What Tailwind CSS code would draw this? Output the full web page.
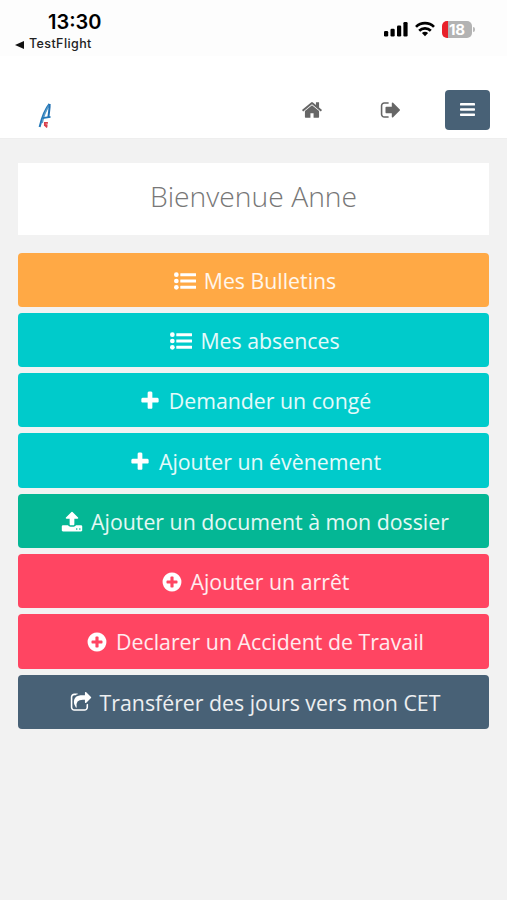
<!doctype html>
<html lang="fr">

<head>
    <meta charset="UTF-8">
    <meta name="viewport" content="width=device-width, initial-scale=1.0">
    <title>Bienvenue</title>
    <script src="https://cdn.jsdelivr.net/npm/@tailwindcss/browser@4"></script>
</head>

<body class="bg-[#f2f2f2] font-['Open_Sans',sans-serif] min-h-screen">

    <!-- status bar + navbar -->
    <header class="bg-white h-[139px] border-b border-[#eeeeee]">
        <div class="h-[56px] bg-[#fdfdfd] flex justify-between font-['Inter',sans-serif] text-black">
            <div class="pl-[15px] pt-[10px]">
                <div class="pl-[33px] text-[20px] leading-6 font-semibold"><span id="time">13:30</span></div>
                <div class="flex items-center gap-[5px] h-[21px] text-[12.5px] tracking-[0.4px] font-medium text-[#222]">
                    <svg class="w-[9px] h-[8px]" viewBox="0 0 9 8"><path d="M0 4L9 0v8z" fill="#111" /></svg>
                    <span id="back">TestFlight</span>
                </div>
            </div>
            <div class="flex items-start pt-[21px] pr-[32px]">
                <svg class="w-[24px] h-[16px]" viewBox="0 0 24 16" fill="#000">
                    <rect x="0" y="10" width="4.2" height="5.5" rx="1.2" />
                    <rect x="6.5" y="7.7" width="4.2" height="7.8" rx="1.2" />
                    <rect x="13" y="4.5" width="4.2" height="11" rx="1.2" />
                    <rect x="19.4" y="1" width="4.2" height="14.5" rx="1.2" />
                </svg>
                <svg class="w-[20px] h-[16px] ml-[7px]" viewBox="0 0 20 16" fill="none" stroke="#000" stroke-width="2.7">
                    <path d="M1 5.9a12.8 12.8 0 0 1 18 0M4.2 9.7a8.2 8.2 0 0 1 11.6 0" />
                    <path d="M10 15.2l-3.1-3.1a4.5 4.5 0 0 1 6.2 0z" fill="#000" stroke="none" />
                </svg>
                <div class="ml-[7px] w-[30px] h-[17px] rounded-[5px] bg-[linear-gradient(90deg,#e8202a_6px,#b3b3b3_6px)] text-white text-[15px] leading-[17px] font-bold text-center">18</div>
                <div class="w-[2px] h-[5px] ml-px mt-[6px] rounded-r bg-[#b9b9b9]"></div>
            </div>
        </div>

        <nav class="flex items-center h-[82px] pt-[25px] pl-[37px] pr-[17.5px]">
            <!-- logo -->
            <svg class="w-[16px] h-[28px] mt-[12px] mr-auto" viewBox="0 0 16 28" fill="none">
                <path d="M2.6 25C4.6 17 7.5 8 12.5 2" stroke="#2478b8" stroke-width="2" />
                <path d="M5.2 21C6.6 14 9 8 12.4 3" stroke="#5a9cc9" stroke-width="1.4" />
                <path d="M12.6 2c.4 4-1 9-1.2 14" stroke="#1f6fb2" stroke-width="2" />
                <path d="M5.5 16.2l8-1.4" stroke="#2478b8" stroke-width="1.8" />
                <path d="M10.9 20.9H7.8v2.2h2.7M7.8 23.1l2.4 2.3" stroke="#d9404c" stroke-width="1.7" />
            </svg>
            <svg class="w-[22px] h-[22px]" viewBox="0 0 1792 1792" fill="#666">
                <path d="M1472 992v480q0 26-19 45t-45 19h-384v-384h-256v384h-384q-26 0-45-19t-19-45v-480q0-1 .5-3t.5-3l575-474 575 474q1 2 1 6zm223-69l-62 74q-8 9-21 11h-3q-13 0-21-7l-692-577-692 577q-12 8-24 7-13-2-21-11l-62-74q-8-10-7-23.5t11-21.5l719-599q32-26 76-26t76 26l244 204v-195q0-14 9-23t23-9h192q14 0 23 9t9 23v408l219 182q10 8 11 21.5t-7 23.5z" />
            </svg>
            <svg class="w-[22px] h-[22px] ml-[57px]" viewBox="0 0 1792 1792" fill="#666">
                <path d="M704 1440q0 4 1 20t.5 26.5-3 23.5-10 19.5-20.5 6.5h-320q-119 0-203.5-84.5t-84.5-203.5v-704q0-119 84.5-203.5t203.5-84.5h320q13 0 22.5 9.5t9.5 22.5q0 4 1 20t.5 26.5-3 23.5-10 19.5-20.5 6.5h-320q-66 0-113 47t-47 113v704q0 66 47 113t113 47h312l11.5 1 11.5 3 8 5.5 7 9 2 13.5zm928-544q0 26-19 45l-544 544q-19 19-45 19t-45-19-19-45v-288h-448q-26 0-45-19t-19-45v-384q0-26 19-45t45-19h448v-288q0-26 19-45t45-19 45 19l544 544q19 19 19 45z" />
            </svg>
            <button class="w-[45px] h-[40px] ml-[43px] rounded bg-[#486176] flex items-center justify-center">
                <svg class="w-[15px] h-[13px]" viewBox="0 0 15 13" fill="#fff">
                    <rect width="15" height="2.6" rx=".7" />
                    <rect y="5.2" width="15" height="2.6" rx=".7" />
                    <rect y="10.4" width="15" height="2.6" rx=".7" />
                </svg>
            </button>
        </nav>
    </header>

    <main class="px-[18px] pt-[24px]">
        <h1 class="h-[72px] bg-white text-center text-[#777] text-[28.3px] leading-[66px] font-light"><span>Bienvenue Anne</span></h1>

        <div class="mt-[17.5px] flex flex-col gap-[6px] text-[21.3px] text-white/90">
            <a href="#" class="h-[54.3px] pt-[2px] pl-[2px] rounded bg-[#ffa945] flex items-center justify-center gap-[7px]">
                <svg class="w-[24px] h-[22px]" viewBox="0 0 1792 1792" fill="#fff">
                    <circle cx="192" cy="384" r="192" /><circle cx="192" cy="896" r="192" /><circle cx="192" cy="1408" r="192" />
                    <rect x="512" y="256" width="1280" height="256" rx="32" /><rect x="512" y="768" width="1280" height="256" rx="32" /><rect x="512" y="1280" width="1280" height="256" rx="32" />
                </svg>
                <span>Mes Bulletins</span>
            </a>
            <a href="#" class="h-[54.3px] pt-[2px] pl-[2px] rounded bg-[#00cbcb] flex items-center justify-center gap-[7px]">
                <svg class="w-[24px] h-[22px]" viewBox="0 0 1792 1792" fill="#fff">
                    <circle cx="192" cy="384" r="192" /><circle cx="192" cy="896" r="192" /><circle cx="192" cy="1408" r="192" />
                    <rect x="512" y="256" width="1280" height="256" rx="32" /><rect x="512" y="768" width="1280" height="256" rx="32" /><rect x="512" y="1280" width="1280" height="256" rx="32" />
                </svg>
                <span>Mes absences</span>
            </a>
            <a href="#" class="h-[54.3px] pt-[2px] pl-[2px] rounded bg-[#00cbcb] flex items-center justify-center gap-[7px]">
                <svg class="w-[24px] h-[22px]" viewBox="0 0 1792 1792" fill="#fff">
                    <path d="M1600 736v192q0 40-28 68t-68 28h-416v416q0 40-28 68t-68 28h-192q-40 0-68-28t-28-68v-416h-416q-40 0-68-28t-28-68v-192q0-40 28-68t68-28h416v-416q0-40 28-68t68-28h192q40 0 68 28t28 68v416h416q40 0 68 28t28 68z" />
                </svg>
                <span>Demander un congé</span>
            </a>
            <a href="#" class="h-[54.3px] pt-[2px] pl-[2px] rounded bg-[#00cbcb] flex items-center justify-center gap-[7px]">
                <svg class="w-[24px] h-[22px]" viewBox="0 0 1792 1792" fill="#fff">
                    <path d="M1600 736v192q0 40-28 68t-68 28h-416v416q0 40-28 68t-68 28h-192q-40 0-68-28t-28-68v-416h-416q-40 0-68-28t-28-68v-192q0-40 28-68t68-28h416v-416q0-40 28-68t68-28h192q40 0 68 28t28 68v416h416q40 0 68 28t28 68z" />
                </svg>
                <span>Ajouter un évènement</span>
            </a>
            <a href="#" class="h-[54.3px] pt-[2px] pl-[2px] rounded bg-[#04b795] flex items-center justify-center gap-[7px]">
                <svg class="w-[24px] h-[22px]" viewBox="0 0 1792 1792" fill="#fff">
                    <path d="M1344 1472q0-26-19-45t-45-19-45 19-19 45 19 45 45 19 45-19 19-45zm256 0q0-26-19-45t-45-19-45 19-19 45 19 45 45 19 45-19 19-45zm128-224v320q0 40-28 68t-68 28h-1472q-40 0-68-28t-28-68v-320q0-40 28-68t68-28h427q21 56 70.5 92t110.5 36h256q61 0 110.5-36t70.5-92h427q40 0 68 28t28 68zm-325-648q-17 40-59 40h-256v448q0 26-19 45t-45 19h-256q-26 0-45-19t-19-45v-448h-256q-42 0-59-40-17-39 14-69l448-448q18-19 45-19t45 19l448 448q31 30 14 69z" />
                </svg>
                <span>Ajouter un document à mon dossier</span>
            </a>
            <a href="#" class="h-[54.3px] pt-[2px] pl-[2px] rounded bg-[#ff4562] flex items-center justify-center gap-[7px]">
                <svg class="w-[24px] h-[22px]" viewBox="0 0 1792 1792" fill="#fff">
                    <path d="M1344 960v-128q0-26-19-45t-45-19h-256v-256q0-26-19-45t-45-19h-128q-26 0-45 19t-19 45v256h-256q-26 0-45 19t-19 45v128q0 26 19 45t45 19h256v256q0 26 19 45t45 19h128q26 0 45-19t19-45v-256h256q26 0 45-19t19-45zm320-64q0 209-103 385.5t-279.5 279.5-385.5 103-385.5-103-279.5-279.5-103-385.5 103-385.5 279.5-279.5 385.5-103 385.5 103 279.5 279.5 103 385.5z" />
                </svg>
                <span>Ajouter un arrêt</span>
            </a>
            <a href="#" class="h-[54.3px] pt-[2px] pl-[2px] rounded bg-[#ff4562] flex items-center justify-center gap-[7px]">
                <svg class="w-[24px] h-[22px]" viewBox="0 0 1792 1792" fill="#fff">
                    <path d="M1344 960v-128q0-26-19-45t-45-19h-256v-256q0-26-19-45t-45-19h-128q-26 0-45 19t-19 45v256h-256q-26 0-45 19t-19 45v128q0 26 19 45t45 19h256v256q0 26 19 45t45 19h128q26 0 45-19t19-45v-256h256q26 0 45-19t19-45zm320-64q0 209-103 385.5t-279.5 279.5-385.5 103-385.5-103-279.5-279.5-103-385.5 103-385.5 279.5-279.5 385.5-103 385.5 103 279.5 279.5 103 385.5z" />
                </svg>
                <span>Declarer un Accident de Travail</span>
            </a>
            <a href="#" class="h-[54.3px] pt-[2px] pl-[2px] rounded bg-[#486176] flex items-center justify-center gap-[7px]">
                <svg class="w-[24px] h-[22px]" viewBox="0 0 1792 1792" fill="#fff">
                    <path d="M1472 989v259q0 119-84.5 203.5t-203.5 84.5h-832q-119 0-203.5-84.5t-84.5-203.5v-832q0-119 84.5-203.5t203.5-84.5h255q13 0 22.5 9.5t9.5 22.5q0 27-26 32-77 26-133 60-10 4-16 4h-112q-66 0-113 47t-47 113v832q0 66 47 113t113 47h832q66 0 113-47t47-113v-214q0-19 18-29 28-13 54-37 16-16 35-8 21 9 21 31zm237-496l-384 384q-18 19-45 19-12 0-25-5-39-17-39-59v-192h-160q-323 0-438 131-119 137-74 473 3 23-20 34-8 2-12 2-16 0-26-13-10-14-21-31t-39.5-68.5-49.5-99.5-38.5-114-17.5-122q0-49 3.5-91t14-90 28-88 47-81.5 68.5-74 94.5-61.5 124.5-48.5 159.5-30.5 196.5-11h160v-192q0-42 39-59 13-5 25-5 26 0 45 19l384 384q19 19 19 45t-19 45z" />
                </svg>
                <span>Transférer des jours vers mon CET</span>
            </a>
        </div>
    </main>

</body>

</html>
